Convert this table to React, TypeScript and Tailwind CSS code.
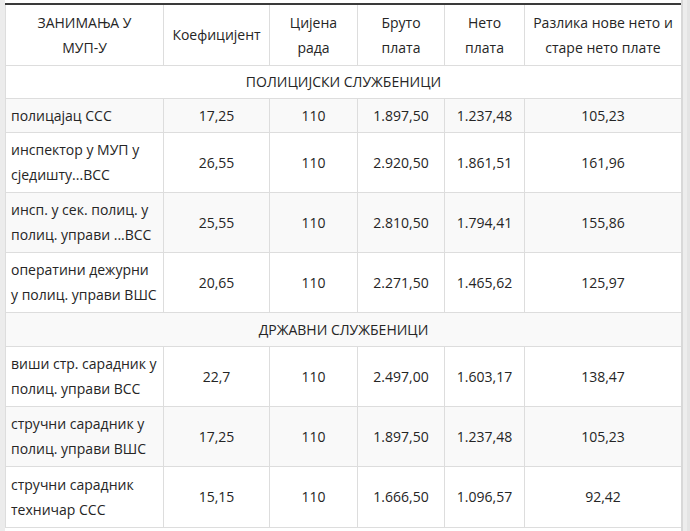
const rows: Array<{ kind: 'section'; title: string } | { kind: 'row'; name: string[]; cells: string[]; h: string }> = [
  { kind: 'section', title: 'ПОЛИЦИЈСКИ СЛУЖБЕНИЦИ' },
  { kind: 'row', name: ['полицајац ССС'], cells: ['17,25', '110', '1.897,50', '1.237,48', '105,23'], h: 'h-[34px]' },
  { kind: 'row', name: ['инспектор у МУП у', 'сједишту...ВСС'], cells: ['26,55', '110', '2.920,50', '1.861,51', '161,96'], h: 'h-[60px]' },
  { kind: 'row', name: ['инсп. у сек. полиц. у', 'полиц. управи ...ВСС'], cells: ['25,55', '110', '2.810,50', '1.794,41', '155,86'], h: 'h-[60px]' },
  { kind: 'row', name: ['оператини дежурни', 'у полиц. управи ВШС'], cells: ['20,65', '110', '2.271,50', '1.465,62', '125,97'], h: 'h-[60px]' },
  { kind: 'section', title: 'ДРЖАВНИ СЛУЖБЕНИЦИ' },
  { kind: 'row', name: ['виши стр. сарадник у', 'полиц. управи ВСС'], cells: ['22,7', '110', '2.497,00', '1.603,17', '138,47'], h: 'h-[60px]' },
  { kind: 'row', name: ['стручни сарадник у', 'полиц. управи ВШС'], cells: ['17,25', '110', '1.897,50', '1.237,48', '105,23'], h: 'h-[60px]' },
  { kind: 'row', name: ['стручни сарадник', 'техничар ССС'], cells: ['15,15', '110', '1.666,50', '1.096,57', '92,42'], h: 'h-[61px]' },
];

export default function App() {
  return (
    <div className="flex w-[690px] h-[531px] bg-[#fafafa] font-['Open_Sans',sans-serif] text-[14px] text-[#252525] overflow-hidden">
      {/* left gutter */}
      <div className="w-[5px] shrink-0 bg-[#ececec]" />

      <div className="w-[676px] shrink-0 bg-white pt-[3px]">
        <table className="w-[676px] table-fixed border-collapse border-t-2 border-t-[#3a3a3a] leading-[25px]">
          <colgroup>
            <col className="w-[158px]" />
            <col className="w-[106px]" />
            <col className="w-[88px]" />
            <col className="w-[87px]" />
            <col className="w-[80px]" />
            <col className="w-[157px]" />
          </colgroup>
          <thead>
            <tr className="h-[61px] bg-white">
              <th className="border border-[#ddd] border-t-0 font-normal text-center px-[5px]">ЗАНИМАЊА У<br />МУП-У</th>
              <th className="border border-[#ddd] border-t-0 font-normal text-center px-[5px]">Коефицијент</th>
              <th className="border border-[#ddd] border-t-0 font-normal text-center px-[5px]">Цијена<br />рада</th>
              <th className="border border-[#ddd] border-t-0 font-normal text-center px-[5px]">Бруто<br />плата</th>
              <th className="border border-[#ddd] border-t-0 font-normal text-center px-[5px]">Нето<br />плата</th>
              <th className="border border-[#ddd] border-t-0 font-normal text-center px-[5px]">Разлика нове нето и<br />старе нето плате</th>
            </tr>
          </thead>
          <tbody>
            {rows.map((r, i) =>
              r.kind === 'section' ? (
                <tr key={i} className={i % 2 === 1 ? 'h-[34px] bg-[#f9f9f9]' : 'h-[33px] bg-white'}>
                  <td colSpan={6} className="border border-[#ddd] text-center">{r.title}</td>
                </tr>
              ) : (
                <tr key={i} className={`${r.h} ${i % 2 === 1 ? 'bg-[#f9f9f9]' : 'bg-white'}`}>
                  <td className="border border-[#ddd] px-[5px] text-left whitespace-nowrap">
                    {r.name.map((n, j) => (
                      <div key={j}>{n}</div>
                    ))}
                  </td>
                  {r.cells.map((c, j) => (
                    <td key={j} className="border border-[#ddd] text-center">{c}</td>
                  ))}
                </tr>
              )
            )}
          </tbody>
        </table>
      </div>

      {/* right scrollbar strip */}
      <div className="w-[9px] shrink-0 flex bg-[#e4e4e4]">
        <div className="w-[2px] bg-[#d8d8d8]" />
        <div className="w-[4px] bg-[#ededed]" />
      </div>
    </div>
  );
}
